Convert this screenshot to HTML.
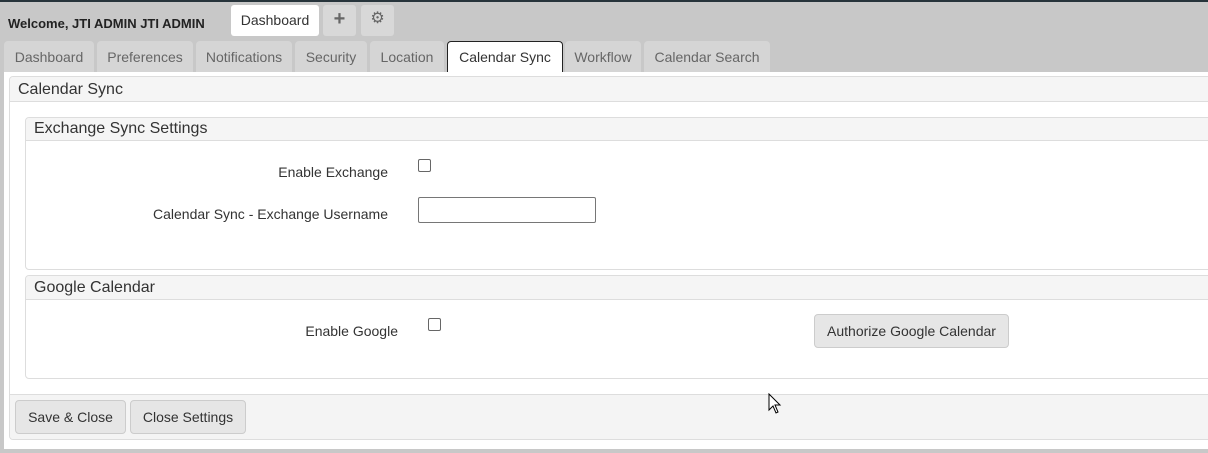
<!DOCTYPE html>
<html><head><style>
*{box-sizing:border-box;margin:0;padding:0}
body{width:1208px;height:453px;overflow:hidden;background:#c8c8c8;font-family:"Liberation Sans",Arial,sans-serif;font-size:14px;color:#333;position:relative}
.a{position:absolute}
.tab{position:absolute;top:41px;height:31px;background:#d5d5d5;border-radius:4px 4px 0 0;color:#666;text-align:center;line-height:32px;font-size:14px}
.btn{position:absolute;background:#e6e6e6;border:1px solid #ccc;border-radius:4px;color:#333;text-align:center;font-size:14px}
.ph{position:absolute;background:#f5f5f5;border-bottom:1px solid #ddd;font-size:16px;color:#333;padding-left:8px}
</style></head><body>
<div class="a" style="left:0;top:0;width:1208px;height:2px;background:#27343b"></div>
<div class="a" style="left:8px;top:16px;font-weight:bold;font-size:13px;color:#222">Welcome, JTI ADMIN JTI ADMIN</div>
<div class="a" style="left:231px;top:5px;width:88px;height:31px;background:#fff;border-radius:3px;text-align:center;line-height:30px;color:#333">Dashboard</div>
<div class="a" style="left:323px;top:5px;width:33px;height:31px;background:#d8d8d8;border-radius:3px;text-align:center;line-height:28px;color:#666;font-weight:bold;font-size:20px">+</div>
<div class="a" style="left:361px;top:5px;width:33px;height:31px;background:#d8d8d8;border-radius:3px;text-align:center;line-height:28px;color:#666;font-size:16px">⚙</div>
<div class="tab" style="left:4px;width:90px">Dashboard</div>
<div class="tab" style="left:97px;width:96px">Preferences</div>
<div class="tab" style="left:196px;width:96px">Notifications</div>
<div class="tab" style="left:295px;width:72px">Security</div>
<div class="tab" style="left:370px;width:74px">Location</div>
<div class="tab" style="left:447px;width:116px;background:#fff;border:1px solid #222;border-bottom:none;color:#333;line-height:31px;height:33px">Calendar Sync</div>
<div class="tab" style="left:565px;width:76px">Workflow</div>
<div class="tab" style="left:644px;width:126px">Calendar Search</div>
<div class="a" style="left:4px;top:72px;width:1204px;height:377px;background:#fff"></div>
<div class="a" style="left:9px;top:76px;width:1210px;height:364px;border:1px solid #ddd;border-radius:4px;background:#fff;overflow:hidden">
 <div class="ph" style="left:0;top:0;width:100%;height:25px;line-height:26px">Calendar Sync</div>
 <div class="a" style="left:0;top:317px;width:100%;height:47px;background:#f4f4f4;border-top:1px solid #ddd"></div>
</div>
<div class="a" style="left:25px;top:117px;width:1200px;height:153px;border:1px solid #ddd;border-radius:4px;overflow:hidden">
 <div class="ph" style="left:0;top:0;width:100%;height:23px;line-height:22px">Exchange Sync Settings</div>
</div>
<div class="a" style="left:25px;top:275px;width:1200px;height:104px;border:1px solid #ddd;border-radius:4px;overflow:hidden">
 <div class="ph" style="left:0;top:0;width:100%;height:24px;line-height:23px">Google Calendar</div>
</div>
<div class="a" style="left:0;top:164px;width:388px;text-align:right">Enable Exchange</div>
<div class="a" style="left:418px;top:159px;width:13px;height:13px;border:1px solid #666;border-radius:2px;background:#fff"></div>
<div class="a" style="left:0;top:206px;width:388px;text-align:right">Calendar Sync - Exchange Username</div>
<div class="a" style="left:418px;top:197px;width:178px;height:26px;border:1px solid #767676;border-radius:2px;background:#fff"></div>
<div class="a" style="left:0;top:323px;width:398px;text-align:right">Enable Google</div>
<div class="a" style="left:428px;top:318px;width:13px;height:13px;border:1px solid #666;border-radius:2px;background:#fff"></div>
<div class="btn" style="left:814px;top:314px;width:195px;height:34px;line-height:32px">Authorize Google Calendar</div>
<div class="btn" style="left:15px;top:400px;width:111px;height:34px;line-height:32px">Save &amp; Close</div>
<div class="btn" style="left:130px;top:400px;width:116px;height:34px;line-height:32px">Close Settings</div>
<svg class="a" style="left:768px;top:393px" width="14" height="22" viewBox="0 0 14 22"><path d="M1 1 L1 17 L5 13 L8 20 L10 19 L7 12 L12 12 Z" fill="#fff" stroke="#000" stroke-width="1"/></svg>
</body></html>
